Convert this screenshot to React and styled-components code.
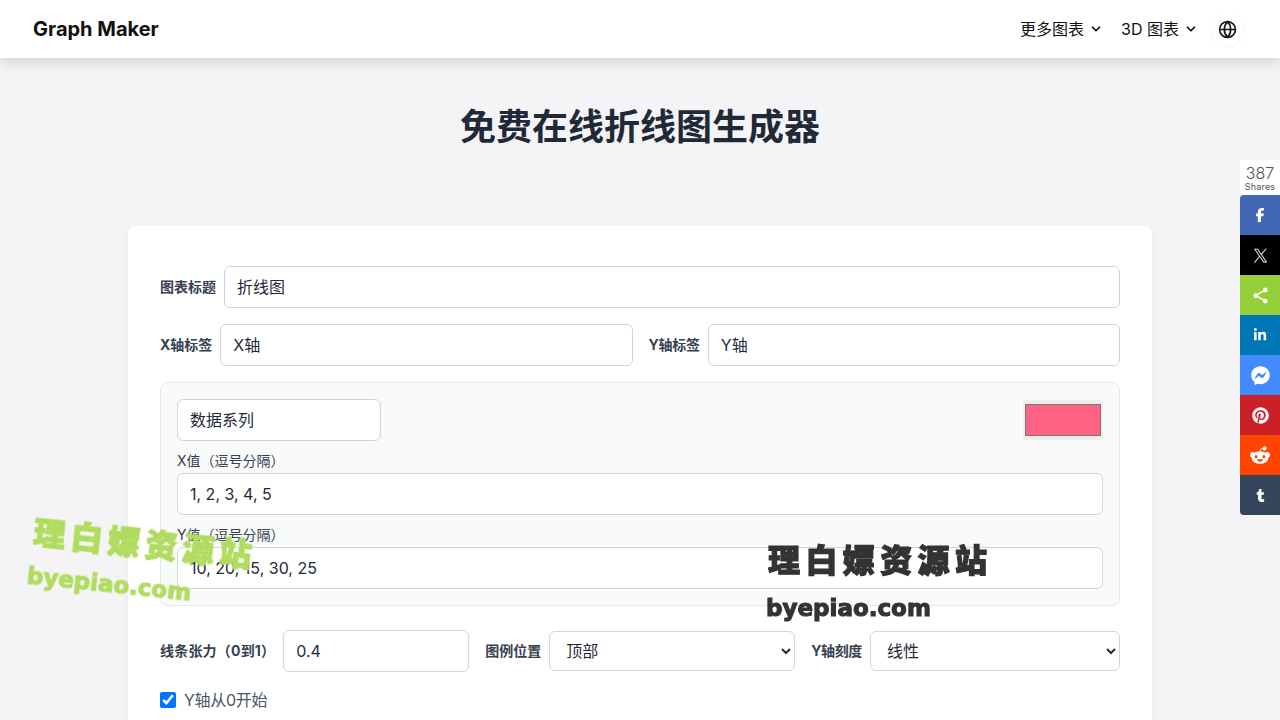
import React from "react";
import styled, { createGlobalStyle } from "styled-components";
import { ChevronDown, Globe } from "lucide-react";
import {
  FaFacebookF,
  FaLinkedinIn,
  FaFacebookMessenger,
  FaPinterest,
  FaRedditAlien,
  FaTumblr,
} from "react-icons/fa6";
import { MdShare } from "react-icons/md";

const FONT = `Inter, "Noto Sans CJK SC", sans-serif`;

const GlobalStyle = createGlobalStyle`
  * { box-sizing: border-box; }
  html, body { margin: 0; padding: 0; overflow: hidden; height: 720px; }
  body { background: #f4f4f6; font-family: ${FONT}; color: #111827; }
`;

const Header = styled.header`
  height: 58px;
  background: #fff;
  box-shadow: 0 4px 12px rgba(0, 0, 0, 0.14);
  display: flex;
  align-items: center;
  justify-content: space-between;
  padding: 0 36px 0 33px;
`;

const Logo = styled.div`
  font-size: 20px;
  font-weight: 700;
  color: #111;
`;

const Nav = styled.nav`
  display: flex;
  align-items: center;
  gap: 18px;
`;

const NavItem = styled.div`
  display: flex;
  align-items: center;
  gap: 5px;
  font-size: 16px;
  color: #111;
  & span {
    padding-bottom: 2px;
  }
`;

const LangButton = styled.div`
  width: 34px;
  height: 34px;
  margin-left: -6px;
  margin-top: 6px;
  border-radius: 50%;
  background: #fff;
  box-shadow: 0 1px 3px rgba(0, 0, 0, 0.05);
  display: flex;
  align-items: center;
  justify-content: center;
  position: relative;
  top: -3px;
  color: #111;
`;

const Title = styled.h1`
  margin: 46px 0 76px;
  text-align: center;
  font-size: 36px;
  line-height: 46px;
  font-weight: 700;
  color: #1f2937;
`;

const Card = styled.main`
  width: 1024px;
  margin: 0 auto;
  background: #fff;
  border-radius: 8px;
  box-shadow: 0 4px 10px rgba(0, 0, 0, 0.05);
  padding: 40px 32px;
  display: flex;
  flex-direction: column;
  gap: 16px;
`;

const Row = styled.div`
  display: flex;
  align-items: center;
  gap: 8px;
`;

const Label = styled.label`
  font-size: 14px;
  font-weight: 700;
  color: #374151;
  white-space: nowrap;
  padding-bottom: 2px;
  margin-left: ${(p) => (p.$follow ? "8px" : 0)};
  letter-spacing: ${(p) => p.$spacing || 0}px;
`;

const Input = styled.input`
  height: 42px;
  flex: ${(p) => (p.$width ? `0 0 ${p.$width}px` : "1 1 0")};
  min-width: 0;
  border: 1px solid #d1d5db;
  border-radius: 6px;
  padding: 0 12px ${(p) => (p.$latin ? 0 : "2px")};
  font-family: ${FONT};
  font-size: 16px;
  color: #1f2937;
  background: #fff;
`;

const Select = styled.select`
  height: 40px;
  flex: ${(p) => `0 0 ${p.$width}px`};
  border: 1px solid #d1d5db;
  border-radius: 6px;
  padding: 0 12px;
  font-family: ${FONT};
  font-size: 16px;
  color: #1f2937;
  background: #fff;
`;

const SeriesBox = styled.section`
  background: #f9fafa;
  border: 1px solid #e5e7eb;
  border-radius: 8px;
  padding: 16px;
  display: flex;
  flex-direction: column;
`;

const SeriesHead = styled.div`
  display: flex;
  justify-content: space-between;
  align-items: center;
  margin-bottom: 10px;
`;

const ColorSwatch = styled.div`
  width: 80px;
  height: 40px;
  background: #efefef;
  padding: 4px 2px;
`;

const ColorFill = styled.div`
  height: 100%;
  background: #ff6384;
  border: 1px solid #767676;
`;

const FieldLabel = styled.div`
  font-size: 14px;
  line-height: 20px;
  color: #374151;
  margin-bottom: 2px;
`;

const SeriesInput = styled(Input)`
  flex: none;
  width: 100%;
  margin-bottom: ${(p) => (p.$last ? 0 : "10px")};
`;

const OptionsRow = styled(Row)`
  margin-top: 8px;
`;

const CheckRow = styled.label`
  display: flex;
  align-items: center;
  gap: 8px;
  font-size: 16px;
  color: #4b5563;
  height: 24px;
  & span {
    padding-bottom: 2px;
    letter-spacing: -0.3px;
  }
`;

const Check = styled.input`
  width: 16px;
  height: 16px;
  margin: 0;
  accent-color: #0075ff;
`;

const ShareBar = styled.aside`
  position: fixed;
  right: 0;
  top: 160px;
  width: 40px;
  display: flex;
  flex-direction: column;
`;

const ShareCount = styled.div`
  height: 35px;
  background: #fff;
  text-align: center;
  color: #555;
  font-size: 16px;
  font-weight: 300;
  line-height: 17px;
  padding-top: 5px;
  & small {
    display: block;
    font-size: 9px;
    line-height: 9px;
    font-weight: 400;
    letter-spacing: 0.2px;
  }
`;

const ShareButton = styled.div`
  height: 40px;
  background: ${(p) => p.$bg};
  color: #fff;
  display: flex;
  align-items: center;
  justify-content: center;
  font-size: ${(p) => p.$size || 14}px;
  &:nth-child(2) {
    border-top-left-radius: 4px;
  }
  &:last-child {
    border-bottom-left-radius: 4px;
  }
`;

const Watermark = styled.div`
  position: fixed;
  left: ${(p) => p.$x}px;
  top: ${(p) => p.$y}px;
  transform: rotate(${(p) => p.$tilt || 0}deg);
  transform-origin: left top;
  color: ${(p) => p.$color};
  pointer-events: none;
  white-space: nowrap;
  -webkit-text-stroke-color: ${(p) => p.$color};
`;

const WatermarkCn = styled.div`
  font-family: "Noto Sans CJK SC", sans-serif;
  font-weight: 900;
  font-size: 32px;
  line-height: 40px;
  letter-spacing: 5.4px;
  -webkit-text-stroke-width: 1.2px;
`;

const WatermarkEn = styled.div`
  font-family: "DejaVu Sans", sans-serif;
  font-weight: 700;
  font-size: 23px;
  line-height: 30px;
  margin-top: ${(p) => p.$gap}px;
  margin-left: -2px;
  -webkit-text-stroke-width: 1.1px;
`;

function XLogo() {
  return (
    <svg width="15" height="15" viewBox="0 0 24 24" fill="currentColor">
      <path d="M14.1 10.3 22 1h-1.9l-6.9 8.1L7.8 1H1.5l8.3 12.1L1.5 23h1.9l7.3-8.5 5.8 8.5h6.3zM4 2.4h2.9l13.2 19.2h-2.9z" />
    </svg>
  );
}

const shares = [
  { bg: "#4267b2", icon: <FaFacebookF /> },
  { bg: "#000", icon: <XLogo /> },
  { bg: "#95d03a", icon: <MdShare />, size: 19 },
  { bg: "#0077b5", icon: <FaLinkedinIn /> },
  { bg: "#448aff", icon: <FaFacebookMessenger />, size: 19 },
  { bg: "#cb2027", icon: <FaPinterest />, size: 17 },
  { bg: "#ff4500", icon: <FaRedditAlien />, size: 20 },
  { bg: "#35465c", icon: <FaTumblr />, size: 13 },
];

export default function App() {
  return (
    <>
      <GlobalStyle />
      <Header>
        <Logo>Graph Maker</Logo>
        <Nav>
          <NavItem>
            <span>更多图表</span> <ChevronDown size={14} strokeWidth={3} />
          </NavItem>
          <NavItem>
            <span>3D 图表</span> <ChevronDown size={14} strokeWidth={3} />
          </NavItem>
          <LangButton>
            <Globe size={19} strokeWidth={2} />
          </LangButton>
        </Nav>
      </Header>
      <Title>免费在线折线图生成器</Title>
      <Card>
        <Row>
          <Label>图表标题</Label>
          <Input defaultValue="折线图" />
        </Row>
        <Row>
          <Label>X轴标签</Label>
          <Input defaultValue="X轴" />
          <Label $follow $spacing={-0.25}>Y轴标签</Label>
          <Input defaultValue="Y轴" />
        </Row>
        <SeriesBox>
          <SeriesHead>
            <Input $width={204} defaultValue="数据系列" />
            <ColorSwatch>
              <ColorFill />
            </ColorSwatch>
          </SeriesHead>
          <FieldLabel>X值（逗号分隔）</FieldLabel>
          <SeriesInput $latin defaultValue="1, 2, 3, 4, 5" />
          <FieldLabel>Y值（逗号分隔）</FieldLabel>
          <SeriesInput $latin $last defaultValue="10, 20, 15, 30, 25" />
        </SeriesBox>
        <OptionsRow>
          <Label $spacing={0.2}>线条张力（0到1）</Label>
          <Input $latin $width={186} defaultValue="0.4" />
          <Label $follow>图例位置</Label>
          <Select $width={246} defaultValue="top">
            <option value="top">顶部</option>
          </Select>
          <Label $follow $spacing={-0.4}>Y轴刻度</Label>
          <Select $width={250} defaultValue="linear">
            <option value="linear">线性</option>
          </Select>
        </OptionsRow>
        <CheckRow>
          <Check type="checkbox" defaultChecked />
          <span>Y轴从0开始</span>
        </CheckRow>
      </Card>
      <ShareBar>
        <ShareCount>
          387
          <small>Shares</small>
        </ShareCount>
        {shares.map((s) => (
          <ShareButton key={s.bg} $bg={s.bg} $size={s.size}>
            {s.icon}
          </ShareButton>
        ))}
      </ShareBar>
      <Watermark $x={36} $y={510} $tilt={6} $color="#b0dc60">
        <WatermarkCn>理白嫖资源站</WatermarkCn>
        <WatermarkEn $gap={11}>byepiao.com</WatermarkEn>
      </Watermark>
      <Watermark $x={768} $y={538} $color="#333">
        <WatermarkCn>理白嫖资源站</WatermarkCn>
        <WatermarkEn $gap={15}>byepiao.com</WatermarkEn>
      </Watermark>
    </>
  );
}
